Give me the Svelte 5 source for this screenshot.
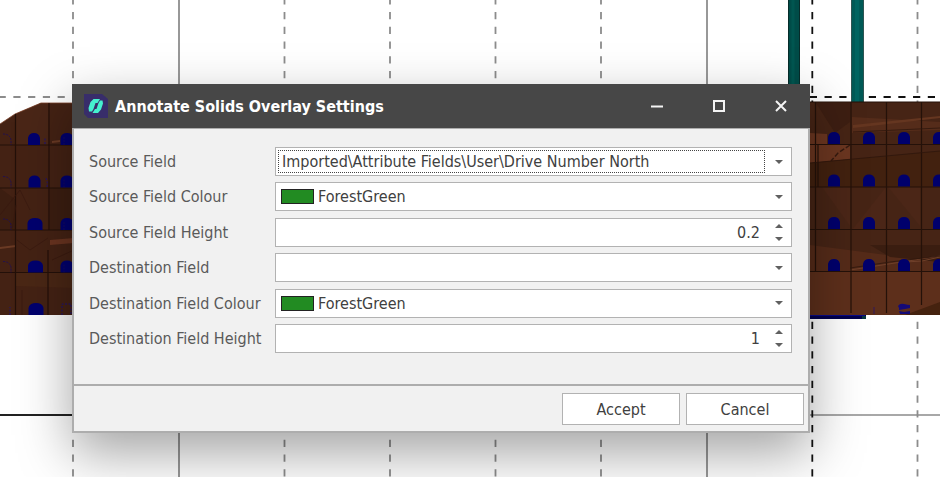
<script>
  const colours = ['ForestGreen', 'SteelBlue', 'Firebrick'];
  const attributeFields = [
    'Imported\\Attribute Fields\\User\\Drive Number North',
    'Imported\\Attribute Fields\\User\\Drive Number South'
  ];

  let sourceField = $state(attributeFields[0]);
  let sourceColour = $state('ForestGreen');
  let sourceHeight = $state(0.2);
  let destinationField = $state('');
  let destinationColour = $state('ForestGreen');
  let destinationHeight = $state(1);

  const dashedColumns = [73, 284.5, 390, 495.5, 601, 917.5];
  const drives = [144, 186.5, 229, 271];
  const rightDrives = [834, 869, 904, 939];

  const arch = (cx, base, w = 12, h = 12) =>
    `M${cx - w / 2} ${base}v${-(h - 5)}q1 -5 ${w / 2} -5q${w / 2 - 1} 0 ${w / 2} 5v${h - 5}z`;
</script>

{#snippet arrow()}
  <svg class="arrow" viewBox="0 0 8 4" aria-hidden="true"><path d="M0 0h8L4 4z" /></svg>
{/snippet}

{#snippet spinner(up, down)}
  <div class="spin">
    <button type="button" aria-label="Increase" onclick={up}>
      <svg viewBox="0 0 8 4" aria-hidden="true"><path d="M0 4h8L4 0z" /></svg>
    </button>
    <button type="button" aria-label="Decrease" onclick={down}>
      <svg viewBox="0 0 8 4" aria-hidden="true"><path d="M0 0h8L4 4z" /></svg>
    </button>
  </div>
{/snippet}

<main>
  <svg class="scene" viewBox="0 0 940 477" preserveAspectRatio="xMidYMid slice" aria-hidden="true">
    <g stroke="#989898" stroke-width="2">
      <path d="M179 0V477M707 0V477" />
      <path d="M810 415H940" stroke="#a8a8a8" />
      <path d="M0 415H73" stroke="#222" />
    </g>
    <g stroke="#8c8c8c" stroke-width="1.8" stroke-dasharray="7.2 7.55" fill="none">
      {#each dashedColumns as x}
        <path d="M{x} -2.7V477" />
      {/each}
      <path d="M-1.4 97H73" />
      <path d="M812.3 -2.7V477M809.8 97H940" stroke="#111" />
    </g>

    <path d="M788 0h12v100h-12z" fill="#004c48" />
    <path d="M788.5 0v100M799.5 0v100" stroke="#062c2a" />
    <path d="M793 0v100" stroke="#005650" stroke-width="3" />
    <path d="M851 0h13v102h-13z" fill="#005a56" />
    <path d="M851.5 0v102M863.5 0v102" stroke="#2f5452" />
    <path d="M857 0v102" stroke="#006460" stroke-width="4" />

    <path d="M0 124L15 114L41 103H74V315H0z" fill="#442214" />
    <path d="M16 114L41 103H48V145H16z" fill="#4a2617" />
    <path d="M0 188L16 200V230H0zM50 188H74V230H50z" fill="#3c1e11" />
    <path d="M16 272H74V288L16 286z" fill="#4a2715" />
    <path d="M50 240L74 238V243L50 245z" fill="#6a3420" />
    <path d="M0 247L16 245V247L0 249zM52 141L60 140V142L52 143z" fill="#6a3a24" />
    <path d="M0 124L15 114L41 103H74" stroke="#7a4028" fill="none" stroke-width=".8" />
    <path d="M0 145H74M0 188H74M0 230H74M0 272.5H74M15.5 114V315M49 103V230M48 250V315" stroke="#231009" stroke-width="1.2" />
    <path d="M17 240L30 250L48 238M0 215L20 190L30 210M52 260L74 250M22 315V290M16 205L12 230" stroke="#38190e" stroke-width=".7" fill="none" />
    {#each [145, 187.5, 230, 272.5, 315] as y, i}
      <path d={arch(34 + i * 0.5, y, i > 1 ? 15 : 12)} fill="#00006e" />
    {/each}
    {#each [145, 187.5, 230, 272.5] as y}
      <path d={arch(67, y, 13)} fill="#00006e" />
      <path d="M64 {y}v-8M3 {y - 11}q7 0 8 6v5" stroke="#1a0c5c" stroke-width=".8" stroke-dasharray="2 1" fill="none" />
    {/each}
    <path d="M45 144v-7M47 187q1-7-2-10M62 315v-11h9v11M10 315v-8" stroke="#1d1078" stroke-width="1" stroke-dasharray="2 1.5" fill="none" />

    <path d="M810 102H940V315H810z" fill="#462415" />
    <path d="M816 103L850 103V122L835 133z" fill="#3d1e12" />
    <path d="M852 117L940 122V117L940 130L852 133z" fill="#552c1a" />
    <path d="M853 128L940 118V116L853 125z" fill="#653620" />
    <path d="M810 133L827 134V144H810zM810 145H850L850 159L810 163z" fill="#6b3620" />
    <path d="M850 145L838 153L831 161" stroke="#351a0f" stroke-width="1.5" stroke-dasharray="5 2" fill="none" />
    <path d="M810 163L940 151V187H810z" fill="#42210f" />
    <path d="M822 187L850 187V226zM888 187L920 187V226zM852 230H886V187z" fill="#4b2617" />
    <path d="M810 245L940 262V315H810z" fill="#552b19" />
    <path d="M870 245H940V262L890 257z" fill="#3a1d10" />
    <path d="M810 272H940V315H810z" fill="#5d2f1b" />
    <path d="M850 270L940 256M905 262L922 261L940 257" stroke="#70402a" fill="none" />
    <path d="M905 315L940 302V315z" fill="#45220f" />
    <path d="M810 102H940M810 144.5H940M810 187H940M810 229.5H940M810 271.5H940M815.5 102V272M818 144V187M851 102V313M886.5 102V313M921.5 102V305" stroke="#241109" stroke-width="1.2" />
    <path d="M810 163L940 151M853 132L940 128M850 268L890 262L940 256" stroke="#2f160c" stroke-width=".8" fill="none" />
    {#each rightDrives as x}
      {#each drives as y}
        <path d={arch(x, y)} fill="#00006c" />
      {/each}
    {/each}
    <path d="M898 306q2-3 6-2t6 1v3l-5 1l-6 1v-2zM899 311l5 1l6-1v3h-10z" fill="#140a78" />
    <path d="M874 307v7" stroke="#1d1078" stroke-width=".7" />
    <path d="M810 315h56v4h-56z" fill="#00004c" />
    <path d="M810 315.5h55" stroke="#0a0a88" />
    <path d="M862 316h4v3h-4z" fill="#07363e" />
  </svg>

  <form class="dialog" aria-labelledby="dialog-title" onsubmit={(e) => e.preventDefault()}>
    <header>
      <svg class="logo" viewBox="0 0 24 24" aria-hidden="true">
        <path d="M0 0H18L24 5V24H4L0 20z" fill="#382d6a" />
        <path d="M9.5 5H16L13.5 9H11.5L9.5 15L8 17.5H5L4.5 14L6.5 8z" fill="#45f0cf" />
        <path d="M16 6.5H18.5L19 9.5L17 15.5L14 19H8.5L11 15H12.5L14.5 9z" fill="#45f0cf" />
      </svg>
      <h1 id="dialog-title">Annotate Solids Overlay Settings</h1>
      <div class="window-buttons">
        <button type="button" aria-label="Minimize">
          <svg viewBox="0 0 12 12" aria-hidden="true"><path d="M0 6.5H12" /></svg>
        </button>
        <button type="button" aria-label="Maximize">
          <svg viewBox="0 0 12 12" aria-hidden="true"><path d="M1 1H11V11H1z" /></svg>
        </button>
        <button type="button" aria-label="Close">
          <svg viewBox="0 0 12 12" aria-hidden="true"><path d="M1 1L11 11M11 1L1 11" /></svg>
        </button>
      </div>
    </header>

    <div class="fields">
      <label for="source-field">Source Field</label>
      <div class="box">
        <select id="source-field" bind:value={sourceField}>
          {#each attributeFields as field}<option>{field}</option>{/each}
        </select>
        <span class="focus-ring"></span>
        {@render arrow()}
      </div>

      <label for="source-colour">Source Field Colour</label>
      <div class="box">
        <select id="source-colour" class="with-swatch" bind:value={sourceColour}>
          {#each colours as colour}<option>{colour}</option>{/each}
        </select>
        <span class="swatch" style="background: {sourceColour}"></span>
        {@render arrow()}
      </div>

      <label for="source-height">Source Field Height</label>
      <div class="box">
        <input id="source-height" type="number" step="0.1" bind:value={sourceHeight} />
        {@render spinner(() => (sourceHeight += 1), () => (sourceHeight -= 1))}
      </div>

      <label for="destination-field">Destination Field</label>
      <div class="box">
        <select id="destination-field" bind:value={destinationField}>
          <option value=""></option>
          {#each attributeFields as field}<option>{field}</option>{/each}
        </select>
        {@render arrow()}
      </div>

      <label for="destination-colour">Destination Field Colour</label>
      <div class="box">
        <select id="destination-colour" class="with-swatch" bind:value={destinationColour}>
          {#each colours as colour}<option>{colour}</option>{/each}
        </select>
        <span class="swatch" style="background: {destinationColour}"></span>
        {@render arrow()}
      </div>

      <label for="destination-height">Destination Field Height</label>
      <div class="box">
        <input id="destination-height" type="number" step="0.1" bind:value={destinationHeight} />
        {@render spinner(() => (destinationHeight += 1), () => (destinationHeight -= 1))}
      </div>
    </div>

    <footer>
      <button type="submit">Accept</button>
      <button type="button">Cancel</button>
    </footer>
  </form>
</main>

<style>
  :global(body) {
    margin: 0;
    background: #fff;
  }

  main {
    position: relative;
    box-sizing: border-box;
    min-height: 100vh;
    padding: 84px 130px 40px 72px;
    overflow: hidden;
    font-family: Tahoma, 'DejaVu Sans Condensed', 'Noto Sans', sans-serif;
    font-size: 16px;
    color: #484848;
  }

  .scene {
    position: absolute;
    inset: 0;
    width: 100%;
    height: 100%;
  }

  .dialog {
    position: relative;
    background: #f1f1f1;
    box-shadow: 0 20px 50px rgba(0, 0, 0, 0.36);
  }

  header {
    display: flex;
    align-items: center;
    height: 44px;
    padding-left: 12px;
    background: #474747;
    color: #fff;
  }

  .logo {
    width: 24px;
    height: 24px;
    margin-right: 7px;
  }

  h1 {
    flex: 1;
    margin: 0;
    font-size: 16px;
    font-weight: bold;
    white-space: nowrap;
  }

  .window-buttons {
    display: flex;
    gap: 4px;
    height: 100%;
  }

  .window-buttons button {
    display: grid;
    place-items: center;
    width: 58px;
    padding: 0;
    border: 0;
    background: none;
  }

  .window-buttons svg {
    width: 12px;
    height: 12px;
    fill: none;
    stroke: #f4f4f4;
    stroke-width: 2;
  }

  .fields {
    display: grid;
    grid-template-columns: 178px 1fr;
    grid-auto-rows: 29px;
    align-content: space-between;
    align-items: center;
    height: 206px;
    padding: 18px 16px 31px 15px;
    border: 2px solid #adadad;
    border-top-width: 1px;
    border-bottom: 0;
  }

  label {
    white-space: nowrap;
    color: #5a5a5a;
  }

  .box {
    box-sizing: border-box;
    display: grid;
    grid-template: 100% / 100%;
    align-items: center;
    height: 29px;
    margin-left: 8px;
    border: 1px solid #b2b2b2;
    background: #fff;
  }

  .box > * {
    grid-area: 1 / 1;
  }

  select,
  input {
    box-sizing: border-box;
    appearance: none;
    width: 100%;
    height: 100%;
    margin: 0;
    padding: 0 31px 0 6px;
    border: 0;
    border-radius: 0;
    background: none;
    font: inherit;
    color: #404040;
  }

  input {
    appearance: textfield;
    text-align: right;
  }

  input::-webkit-inner-spin-button {
    appearance: none;
    margin: 0;
  }

  .with-swatch {
    padding-left: 42px;
  }

  .swatch {
    box-sizing: border-box;
    width: 33px;
    height: 15px;
    margin-left: 5px;
    border: 1px solid #222;
    pointer-events: none;
  }

  .focus-ring {
    align-self: stretch;
    margin: 2px 26px 2px 2px;
    border: 1px dotted #444;
    pointer-events: none;
  }

  .arrow,
  .spin {
    justify-self: end;
    margin-right: 8px;
  }

  .arrow,
  .spin svg {
    display: block;
    width: 8px;
    height: 4px;
    fill: #606060;
    pointer-events: none;
  }

  .spin {
    display: grid;
    gap: 1px;
  }

  .spin button {
    display: grid;
    place-items: center;
    height: 12px;
    padding: 0;
    border: 0;
    background: none;
  }

  footer {
    display: flex;
    justify-content: flex-end;
    gap: 6px;
    padding: 7px 4px 6px;
    border: 2px solid #adadad;
  }

  footer button {
    box-sizing: border-box;
    width: 118px;
    height: 32px;
    padding: 0;
    border: 1px solid #b2b2b2;
    border-radius: 0;
    background: #fff;
    font: inherit;
    color: #404040;
  }
</style>
